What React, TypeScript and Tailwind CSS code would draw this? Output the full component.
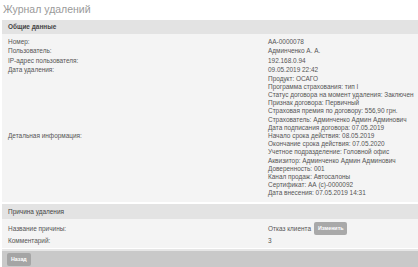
import React from 'react';

const details = [
  'Продукт: ОСАГО',
  'Программа страхования: тип I',
  'Статус договора на момент удаления: Заключен',
  'Признак договора: Первичный',
  'Страховая премия по договору: 556,90 грн.',
  'Страхователь: Админченко Админ Админович',
  'Дата подписания договора: 07.05.2019',
  'Начало срока действия: 08.05.2019',
  'Окончание срока действия: 07.05.2020',
  'Учетное подразделение: Головной офис',
  'Аквизитор: Админченко Админ Админович',
  'Доверенность: 001',
  'Канал продаж: Автосалоны',
  'Сертификат: АА (с)-0000092',
  'Дата внесения: 07.05.2019 14:31',
];

const Row: React.FC<{ label: string; children: React.ReactNode }> = ({ label, children }) => (
  <div className="flex items-center h-[9.4px]">
    <div className="w-[260px] shrink-0">{label}</div>
    <div className="flex items-center whitespace-nowrap">{children}</div>
  </div>
);

const App: React.FC = () => {
  return (
    <div className="w-[418px] h-[267px] bg-white overflow-hidden flex flex-col font-['Liberation_Sans',Arial,sans-serif] text-[6.45px] text-[#555]">
      <h1 className="px-[3px] pt-[2px] h-[20px] text-[10.5px] leading-[15px] text-[#9a9a9a]">Журнал удалений</h1>

      {/* Общие данные */}
      <div className="ml-[2px]">
        <div className="h-[14px] bg-[#e3e3e3] px-[6px] flex items-center font-bold text-[#444]">Общие данные</div>
        <div className="bg-[#f4f4f4] h-[168px] px-[6px] pt-[3px]">
          <Row label="Номер:">АА-0000078</Row>
          <Row label="Пользователь:">Админченко А. А.</Row>
          <Row label="IP-адрес пользователя:">192.168.0.94</Row>
          <div className="flex items-start">
            <div className="w-[260px] shrink-0 leading-[9.4px]">Дата удаления:</div>
            <div className="leading-[9.4px] whitespace-nowrap">09.05.2019 22:42</div>
          </div>
          <div className="flex items-center pb-[5px]">
            <div className="w-[260px] shrink-0">Детальная информация:</div>
            <div className="leading-[8.2px] whitespace-nowrap">
              {details.map(d => (
                <div key={d}>{d}</div>
              ))}
            </div>
          </div>
        </div>
      </div>

      {/* Причина удаления */}
      <div className="ml-[2px] mt-[2px]">
        <div className="h-[15px] bg-[#e3e3e3] px-[6px] flex items-center text-[#444]">Причина удаления</div>
        <div className="bg-[#f4f4f4] h-[29px] px-[6px] pt-[2px]">
          <div className="flex items-center h-[15px]">
            <div className="w-[260px] shrink-0">Название причины:</div>
            <div className="flex items-center gap-[3px] whitespace-nowrap">
              <span>Отказ клиента</span>
              <button className="h-[13px] px-[4px] rounded-[2px] bg-[#a9a9a9] text-white font-bold text-[5.3px]">Изменить</button>
            </div>
          </div>
          <div className="flex items-center h-[9px]">
            <div className="w-[260px] shrink-0">Комментарий:</div>
            <div>3</div>
          </div>
        </div>
      </div>

      {/* Нижняя панель */}
      <div className="ml-[2px] mt-[1px] flex-1 bg-[#c9c9c9] border-t-[2px] border-[#e6e6e6] px-[5px] pt-[2px]">
        <button className="h-[13px] px-[4px] rounded-[2px] bg-[#a5a5a5] text-white font-bold text-[5.3px]">Назад</button>
      </div>
    </div>
  );
};

export default App;
